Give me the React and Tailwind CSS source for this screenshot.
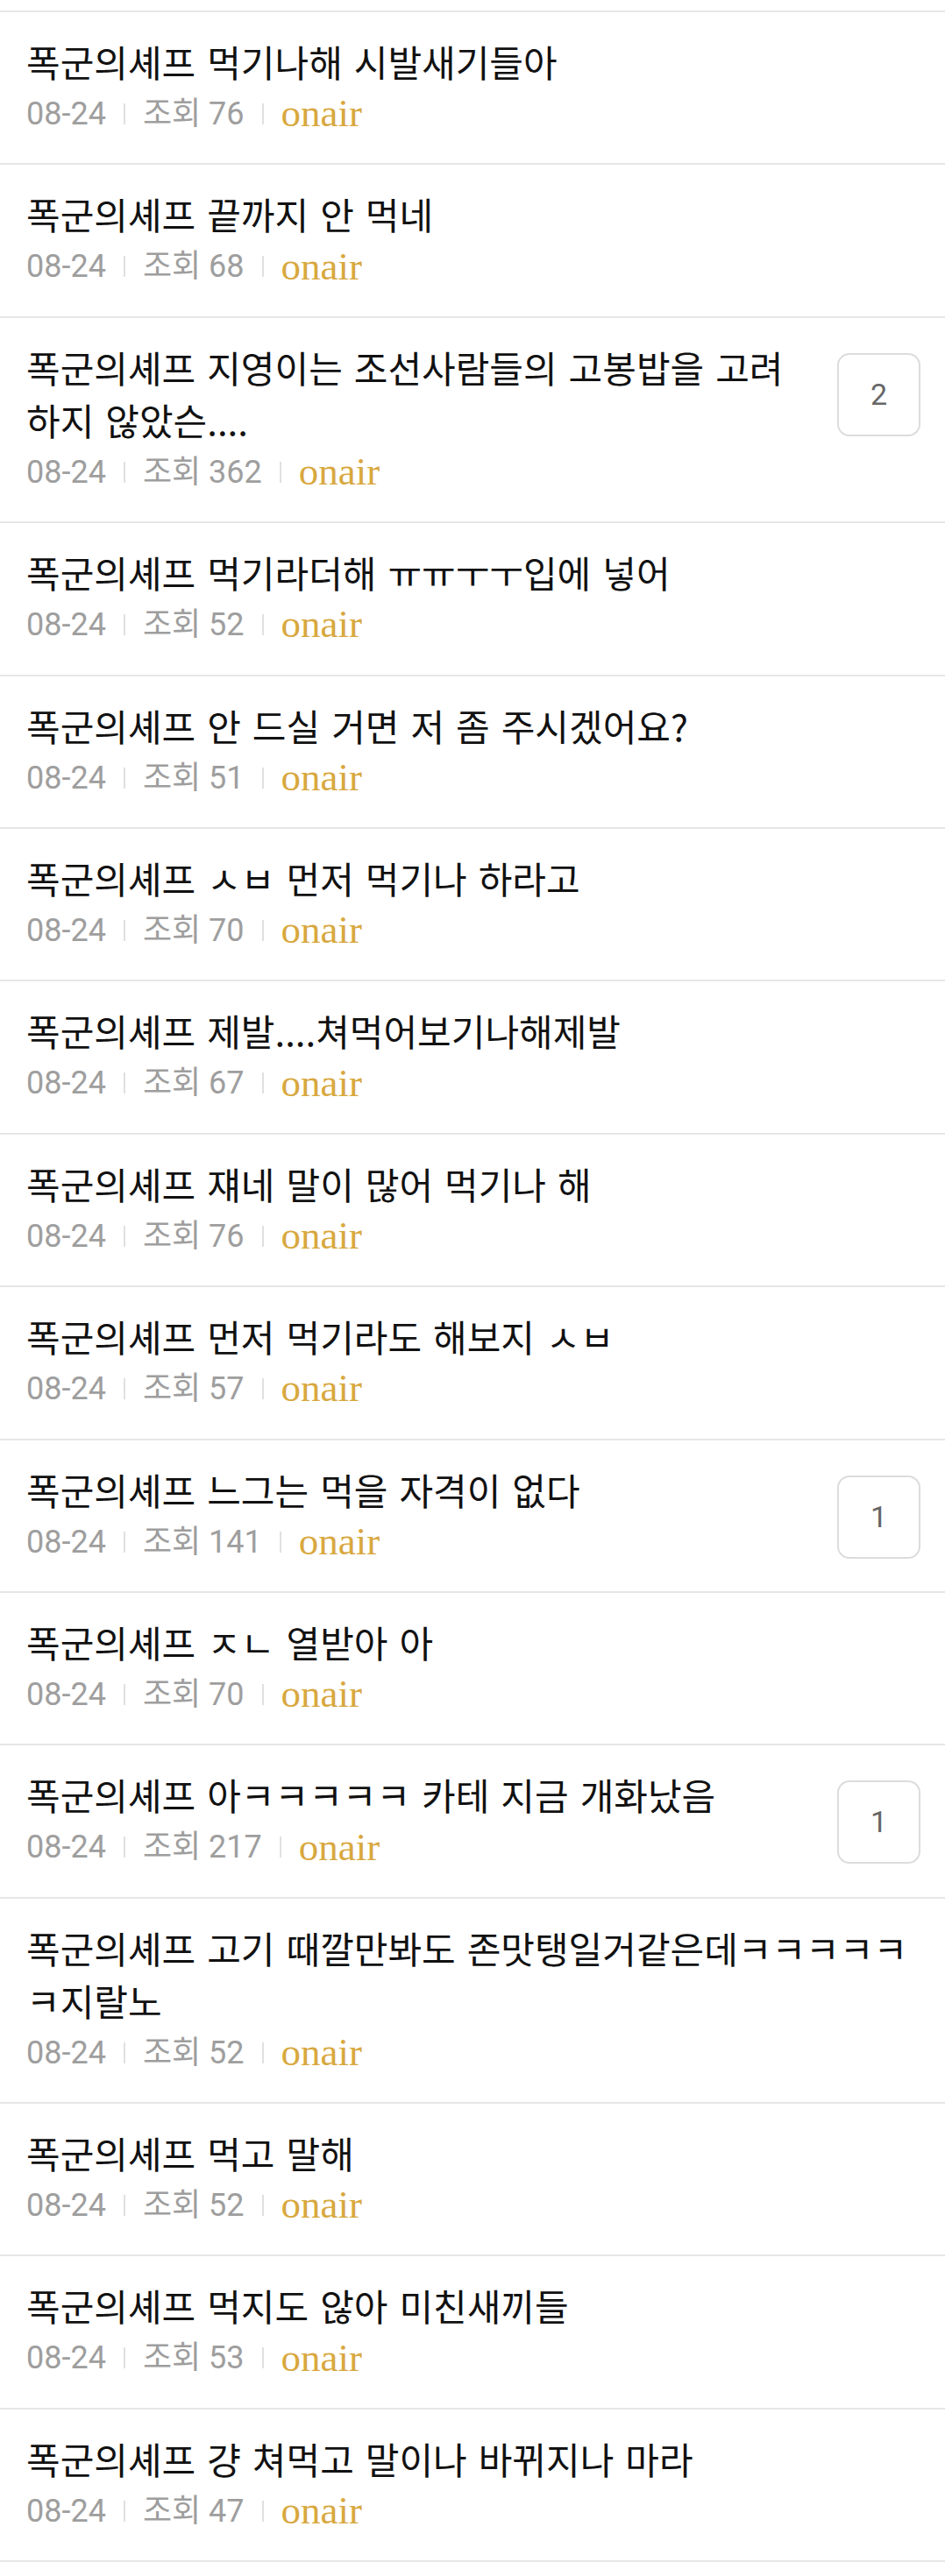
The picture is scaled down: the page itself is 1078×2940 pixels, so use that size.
import React from 'react';

const posts = [
  { title: '폭군의셰프 먹기나해 시발새기들아', views: 76 },
  { title: '폭군의셰프 끝까지 안 먹네', views: 68 },
  { title: '폭군의셰프 지영이는 조선사람들의 고봉밥을 고려하지 않았슨....', views: 362, comments: 2 },
  { title: '폭군의셰프 먹기라더해 ㅠㅠㅜㅜ입에 넣어', views: 52 },
  { title: '폭군의셰프 안 드실 거면 저 좀 주시겠어요?', views: 51 },
  { title: '폭군의셰프 ㅅㅂ 먼저 먹기나 하라고', views: 70 },
  { title: '폭군의셰프 제발....쳐먹어보기나해제발', views: 67 },
  { title: '폭군의셰프 쟤네 말이 많어 먹기나 해', views: 76 },
  { title: '폭군의셰프 먼저 먹기라도 해보지 ㅅㅂ', views: 57 },
  { title: '폭군의셰프 느그는 먹을 자격이 없다', views: 141, comments: 1 },
  { title: '폭군의셰프 ㅈㄴ 열받아 아', views: 70 },
  { title: '폭군의셰프 아ㅋㅋㅋㅋㅋ 카테 지금 개화났음', views: 217, comments: 1 },
  { title: '폭군의셰프 고기 때깔만봐도 존맛탱일거같은데ㅋㅋㅋㅋㅋㅋ지랄노', views: 52 },
  { title: '폭군의셰프 먹고 말해', views: 52 },
  { title: '폭군의셰프 먹지도 않아 미친새끼들', views: 53 },
  { title: '폭군의셰프 걍 쳐먹고 말이나 바뀌지나 마라', views: 47 },
];

function Sep() {
  return <span className="mx-[20px] inline-block h-[24px] w-[2px] bg-[#e0e0e0]" />;
}

function PostRow({ post }) {
  return (
    <div className="flex items-start border-b-2 border-[#e6e6e6] pl-[30px] pr-[28px] pt-[26px] pb-[26.4px]">
      <div className="min-w-0 flex-1">
        <div className="text-[42px] leading-[60px] text-[#111] [word-spacing:3.6px] font-['Noto_Sans_CJK_KR',sans-serif]">
          {post.title}
        </div>
        <div className="flex h-[60px] items-center text-[36px] text-[#9e9e9e] font-['Roboto','Noto_Sans_CJK_KR',sans-serif]">
          <span>08-24</span>
          <Sep />
          <span>조회 {post.views}</span>
          <Sep />
          <span className="text-[45px] text-[#d8a840] font-['Liberation_Serif',serif]">onair</span>
        </div>
      </div>
      {post.comments && (
        <div className="ml-[40px] mt-[14px] flex h-[95px] w-[95px] shrink-0 items-center justify-center rounded-[14px] border-2 border-[#dcdcdc] text-[34px] text-[#666] font-['Roboto',sans-serif]">
          {post.comments}
        </div>
      )}
    </div>
  );
}

export default function App() {
  return (
    <div className="min-h-[2940px] w-full bg-white">
      <div className="h-[14px] border-b-2 border-[#e6e6e6]" />
      {posts.map((post, i) => (
        <PostRow key={i} post={post} />
      ))}
    </div>
  );
}
